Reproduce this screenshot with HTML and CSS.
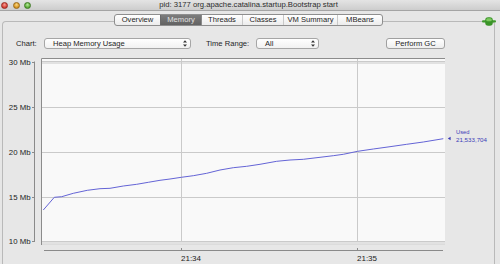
FILE: index.html
```html
<!DOCTYPE html>
<html>
<head>
<meta charset="utf-8">
<link rel="stylesheet" href="styles.css">
</head>
<body>
<div class="window">
  <div class="titlebar">
    <div class="lights">
      <span class="light red"></span>
      <span class="light yellow"></span>
      <span class="light green"></span>
    </div>
    <div class="title">pid: 3177 org.apache.catalina.startup.Bootstrap start</div>
    <div></div>
  </div>
  <div class="tabrow">
    <div class="tabs">
      <span class="tab w45">Overview</span>
      <span class="tab w41 selected">Memory</span>
      <span class="tab w41">Threads</span>
      <span class="tab w41">Classes</span>
      <span class="tab w54">VM Summary</span>
      <span class="tab w45">MBeans</span>
    </div>
    <svg class="plug" width="14" height="9" viewBox="0 0 14 9">
      <rect x="0" y="3.2" width="14" height="2.4" rx="1" fill="#3f9a2c"/>
      <rect x="3.2" y="0.3" width="7.6" height="8.4" rx="3" fill="#3a9428"/>
      <rect x="4.2" y="1.2" width="5.6" height="3" rx="1.5" fill="#7cc95e"/>
    </svg>
  </div>
  <div class="panel">
    <div class="controls">
      <span class="label chart-label">Chart:</span>
      <div class="combo combo-chart"><span>Heap Memory Usage</span>
        <svg class="updown" width="4" height="7" viewBox="0 0 4 7"><path d="M0 2.6 L2 0.3 L4 2.6Z M0 4.4 L2 6.7 L4 4.4Z" fill="#333"/></svg>
      </div>
      <span class="label range-label">Time Range:</span>
      <div class="combo combo-range"><span>All</span>
        <svg class="updown" width="4" height="7" viewBox="0 0 4 7"><path d="M0 2.6 L2 0.3 L4 2.6Z M0 4.4 L2 6.7 L4 4.4Z" fill="#333"/></svg>
      </div>
      <button class="btn">Perform GC</button>
    </div>
    <svg class="chart" width="490" height="214" viewBox="3 50 490 214">
      <!-- y axis -->
      <g class="ylabels">
        <text x="30.5" y="65.3">30 Mb</text>
        <text x="30.5" y="110.3">25 Mb</text>
        <text x="30.5" y="155.3">20 Mb</text>
        <text x="30.5" y="200.3">15 Mb</text>
        <text x="30.5" y="244.3">10 Mb</text>
      </g>
      <path d="M34.5 61.5 V242 M32 62.5 H34.5 M32 107.5 H34.5 M32 152.5 H34.5 M32 197.5 H34.5 M32 241.5 H34.5" stroke="#8a8a8a" stroke-width="1" fill="none"/>
      <!-- plot frame -->
      <rect x="41" y="58" width="404" height="187" fill="#f9f9f9"/>
      <path d="M41.5 245 V58.5 H445" stroke="#8c8c8c" fill="none"/>
      <path d="M42 244.5 H445" stroke="#dcdcdc" fill="none"/>
      <!-- grid -->
      <g stroke="#cacaca" stroke-width="1" fill="none">
        <path d="M42 61.5 H445 M42 63 H445"/>
        <path d="M42 107.5 H445"/>
        <path d="M42 152.5 H445"/>
        <path d="M42 197.5 H445"/>
        <path d="M42 241.5 H445 M42 243 H445"/>
        <path d="M181.5 59 V241.5"/>
        <path d="M357.5 59 V241.5"/>
      </g>
      <!-- x axis -->
      <path d="M44 250.5 H443 M181.5 248 V250.5 M357.5 248 V250.5" stroke="#8a8a8a" fill="none"/>
      <g class="xlabels">
        <text x="181" y="260.5">21:34</text>
        <text x="357" y="260.5">21:35</text>
      </g>
      <!-- data -->
      <polyline fill="none" stroke="#6464d6" stroke-width="1" stroke-linejoin="round"
        points="43.3,210 54.3,197.3 61.7,196.7 73.3,193.3 87.3,190.3 100,188.7 110,188.3 123.3,186 136.7,184.3 148.3,182.3 160,180.3 170,179 181.3,177.3 193.3,175.7 206.7,173.3 220,170 233.3,167.7 246.7,166.3 260,164.3 276.7,161.3 290,160 303.3,159.3 320,157.3 333.3,155.7 343.3,154.3 357.7,151.3 373.3,149 390,146.7 406.7,144.3 423.3,142 443.3,138.7"/>
      <!-- legend -->
      <polygon points="447.8,138.5 450.6,136.8 450.6,140.2" fill="#3c3cb8"/>
      <text class="legend small" x="456" y="134.3">Used</text>
      <text class="legend" x="456" y="141.6">21,533,704</text>
    </svg>
  </div>
</div>
</body>
</html>
```

FILE: styles.css
```css
html, body {
  margin: 0;
  padding: 0;
}

body {
  width: 500px;
  height: 264px;
  overflow: hidden;
  background: #e6e6e6;
  font-family: "Liberation Sans", Arial, sans-serif;
  font-size: 7.6px;
  color: #1e1e1e;
}

.window {
  display: flex;
  flex-direction: column;
  height: 264px;
}

.titlebar {
  height: 10px;
  border-bottom: 1px solid #a4a4a4;
  background: linear-gradient(#e4e4e4, #cdcdcd);
  display: grid;
  grid-template-columns: 40px 1fr 40px;
  align-items: center;
}

.lights {
  display: flex;
  gap: 4.5px;
  padding-left: 1px;
  align-items: center;
}

.light {
  width: 7px;
  height: 7px;
  border-radius: 50%;
  box-sizing: border-box;
}

.light.red {
  background: radial-gradient(circle at 50% 35%, #f5a097 0%, #de4b3f 55%, #b0281e 100%);
  border: 0.5px solid #9a2a22;
}

.light.yellow {
  background: radial-gradient(circle at 50% 35%, #f8d88a 0%, #dfa02c 55%, #b57812 100%);
  border: 0.5px solid #9a6a18;
}

.light.green {
  background: radial-gradient(circle at 50% 35%, #b9e8a2 0%, #69b845 55%, #3f8a22 100%);
  border: 0.5px solid #3d7a22;
}

.title {
  text-align: center;
  color: #2c2c2c;
  font-size: 7.7px;
  line-height: 10px;
  white-space: nowrap;
  padding-right: 3px;
}

.tabrow {
  position: relative;
  z-index: 1;
  display: flex;
  justify-content: center;
  margin-top: 3px;
  height: 12px;
  padding-right: 3px;
}

.tabs {
  display: flex;
  height: 12px;
  box-sizing: border-box;
  border: 1px solid #8e8e8e;
  border-radius: 3px;
  background: linear-gradient(#ffffff, #ececec);
  overflow: hidden;
}

.tab {
  box-sizing: border-box;
  text-align: center;
  line-height: 10px;
  border-left: 1px solid #c9c9c9;
  color: #1e1e1e;
  white-space: nowrap;
}

.tab:first-child {
  border-left: none;
}

.w45 { width: 45px; }
.w41 { width: 41px; }
.w54 { width: 54px; }

.tab.selected {
  background: linear-gradient(#7c7c7c, #626262);
  color: #e2e2e2;
  border-left-color: #6a6a6a;
}

.tab.selected + .tab {
  border-left-color: #8a8a8a;
}

.plug {
  position: absolute;
  left: 482px;
  top: 3px;
}

.panel {
  margin: -5px 5px 0 2px;
  flex: 1;
  border: 1px solid #b9b9b9;
  border-bottom: none;
  border-radius: 4px 4px 0 0;
  background: #e7e7e7;
}

.controls {
  display: flex;
  align-items: center;
  height: 12px;
  margin-top: 15.5px;
  padding-left: 13px;
}

.label {
  white-space: nowrap;
}

.chart-label {
  width: 28px;
}

.range-label {
  width: 50px;
  margin-left: 15px;
}

.combo {
  box-sizing: border-box;
  height: 11px;
  border: 1px solid #a6a6a6;
  border-radius: 3px;
  background: linear-gradient(#ffffff, #f1f1f1);
  display: flex;
  align-items: center;
  justify-content: space-between;
  padding: 0 3px 0 8px;
  line-height: 9px;
}

.combo-chart {
  width: 147px;
}

.combo-range {
  width: 63px;
}

.updown {
  display: block;
}

.btn {
  box-sizing: border-box;
  width: 59px;
  height: 11px;
  margin-left: 67px;
  padding: 0;
  border: 1px solid #a0a0a0;
  border-radius: 3px;
  background: linear-gradient(#ffffff, #eeeeee);
  font-family: inherit;
  font-size: 7.6px;
  line-height: 9px;
  color: #1e1e1e;
}

.chart {
  display: block;
}

.ylabels text {
  font-family: "Liberation Sans", Arial, sans-serif;
  font-size: 7.8px;
  fill: #222222;
  text-anchor: end;
}

.xlabels text {
  font-family: "Liberation Sans", Arial, sans-serif;
  font-size: 8px;
  fill: #222222;
}

.legend {
  font-family: "Liberation Sans", Arial, sans-serif;
  font-size: 6.2px;
  fill: #3c3cb8;
}

.legend.small {
  font-size: 5.8px;
}
```
